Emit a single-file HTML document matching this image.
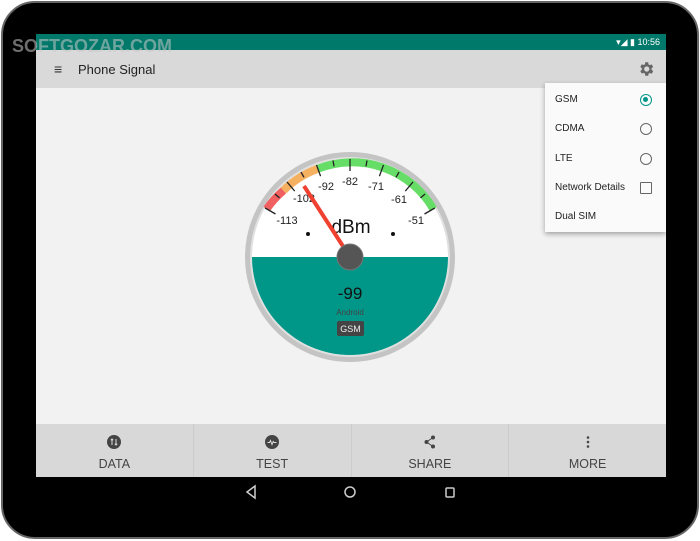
<!DOCTYPE html>
<html><head><meta charset="utf-8"><style>
*{margin:0;padding:0;box-sizing:border-box}
body{width:700px;height:541px;background:#fff;font-family:"Liberation Sans",sans-serif;position:relative;overflow:hidden}
.tab{position:absolute;left:1px;top:1px;width:698px;height:538px;background:#000;border-radius:34px;border:2px solid #666}
.scr{position:absolute;left:36px;top:34px;width:630px;height:443px;background:#f2f2f2;overflow:hidden}
.status{height:16px;background:#00796b;color:#fff;font-size:9px;text-align:right;padding-right:6px;line-height:16px}
.bar{height:38px;background:#d9d9d9;position:relative}
.bar .t{position:absolute;left:42px;top:12px;font-size:13px;color:#222}
.btm{position:absolute;left:0;top:390px;width:630px;height:53px;background:#d8d8d8;display:flex}
.btm>div{flex:1;text-align:center;border-right:1px solid #ccc;font-size:12.5px;color:#444;padding-top:11px}
.btm>div:last-child{border:none}
.ic{width:14px;height:14px;margin:0 auto 8px;display:block}
.menu{position:absolute;left:545px;top:83px;width:121px;height:149px;background:#fafafa;box-shadow:0 2px 5px rgba(0,0,0,.35);font-size:10px;color:#222;padding-top:2px}
.menu div{height:29.3px;line-height:29.3px;padding-left:10px;position:relative}
.rb{position:absolute;right:14px;top:9px;width:12px;height:12px;border:1.5px solid #666;border-radius:50%}
</style></head><body>
<div class="tab"></div>
<div class="scr">
<div class="status">▾◢ ▮ 10:56</div>
<div class="bar"><span style="position:absolute;left:18px;top:11px;font-size:14px;color:#333">≡</span><span class="t">Phone Signal</span>
<svg style="position:absolute;left:601px;top:10px" width="18" height="18" viewBox="0 0 24 24"><path fill="#666" d="M19.4 13a7.5 7.5 0 000-2l2.1-1.6-2-3.5-2.5 1a7.3 7.3 0 00-1.7-1L15 3h-4l-.4 2.7a7.3 7.3 0 00-1.7 1l-2.5-1-2 3.5L6.5 11a7.5 7.5 0 000 2l-2.1 1.6 2 3.5 2.5-1c.5.4 1.1.8 1.7 1L11 21h4l.4-2.7c.6-.2 1.2-.6 1.7-1l2.5 1 2-3.5zM13 15.5a3.5 3.5 0 110-7 3.5 3.5 0 010 7z"/></svg></div>
<div class="btm">
<div><svg class="ic" viewBox="0 0 14 14"><circle cx="7" cy="7" r="7" fill="#444"/><path d="M5 4v6M3.8 5.2L5 4l1.2 1.2M9 4v6M7.8 8.8L9 10l1.2-1.2" stroke="#ddd" stroke-width="1" fill="none"/></svg>DATA</div>
<div><svg class="ic" viewBox="0 0 14 14"><circle cx="7" cy="7" r="7" fill="#444"/><path d="M2.5 7.5h2l1-2 1.5 4 1.2-3 .8 1h2.5" stroke="#ddd" stroke-width="1" fill="none"/></svg>TEST</div>
<div><svg class="ic" viewBox="0 0 14 14"><circle cx="10" cy="2.5" r="2" fill="#444"/><circle cx="3.5" cy="7" r="2" fill="#444"/><circle cx="10" cy="11.5" r="2" fill="#444"/><path d="M10 2.5L3.5 7 10 11.5" stroke="#444" stroke-width="1" fill="none"/></svg>SHARE</div>
<div><svg class="ic" viewBox="0 0 14 14"><circle cx="7" cy="2.5" r="1.3" fill="#444"/><circle cx="7" cy="7" r="1.3" fill="#444"/><circle cx="7" cy="11.5" r="1.3" fill="#444"/></svg>MORE</div>
</div>
</div>
<svg style="position:absolute;left:0;top:0" width="700" height="541">
<defs><clipPath id="c"><circle cx="350" cy="257" r="98"/></clipPath></defs>
<circle cx="350" cy="257" r="105" fill="#c4c4c4"/>
<circle cx="350" cy="257" r="100" fill="#e0e0e0"/>
<circle cx="350" cy="257" r="98" fill="#fff"/>
<rect x="240" y="257" width="220" height="110" fill="#009688" clip-path="url(#c)"/>
<g fill="none" stroke-width="8">
<path d="M266.7 209 A94 94 0 0 1 283.5 190.5" stroke="#f06060"/>
<path d="M283.5 190.5 A94 94 0 0 1 318 168.7" stroke="#f5b060"/>
<path d="M318 168.7 A94 94 0 0 1 433.3 209" stroke="#66dd66"/>
</g>
<g stroke="#222" stroke-width="1.3" id="tk"></g>
<g font-size="11" fill="#222" text-anchor="middle">
<text x="287" y="224">-113</text><text x="304" y="202">-102</text><text x="326" y="190">-92</text><text x="350" y="185">-82</text><text x="376" y="190">-71</text><text x="399" y="203">-61</text><text x="416" y="224">-51</text>
</g>
<text x="351" y="233" font-size="19" text-anchor="middle" fill="#111">dBm</text>
<circle cx="308" cy="234" r="2" fill="#111"/><circle cx="393" cy="234" r="2" fill="#111"/>
<line x1="304" y1="186" x2="348" y2="254" stroke="#f04030" stroke-width="4"/>
<circle cx="350" cy="257" r="13" fill="#555" stroke="#777" stroke-width="1"/>
<text x="350" y="299" font-size="17" text-anchor="middle" fill="#111">-99</text>
<text x="350" y="315" font-size="8" text-anchor="middle" fill="#444">Android</text>
<rect x="337" y="321" width="27" height="15" rx="2" fill="#444"/>
<text x="350.5" y="332" font-size="9" text-anchor="middle" fill="#eee">GSM</text>
<g fill="none" stroke="#ccc" stroke-width="1.5"><path d="M255 486 L247 492 L255 498Z"/><circle cx="350" cy="492" r="5"/><rect x="446" y="488" width="8" height="9" rx="1"/></g>
<text x="12" y="52" font-size="18" font-weight="bold" fill="rgba(200,200,200,.55)">SOFTGOZAR.COM</text>
</svg>
<script>
var g=document.getElementById('tk'),s='';
for(var i=0;i<=12;i++){var a=(-60+i*10)*Math.PI/180,ro=98,ri=i%2?92:86;
s+='<line x1="'+(350+ro*Math.sin(a))+'" y1="'+(257-ro*Math.cos(a))+'" x2="'+(350+ri*Math.sin(a))+'" y2="'+(257-ri*Math.cos(a))+'"/>';}
g.innerHTML=s;
</script>
<div class="menu">
<div>GSM<span class="rb" style="border-color:#009688"><span style="position:absolute;left:2px;top:2px;width:5px;height:5px;border-radius:50%;background:#009688"></span></span></div>
<div>CDMA<span class="rb"></span></div>
<div>LTE<span class="rb"></span></div>
<div>Network Details<span class="rb" style="border-radius:1px"></span></div>
<div>Dual SIM</div>
</div>
</body></html>
